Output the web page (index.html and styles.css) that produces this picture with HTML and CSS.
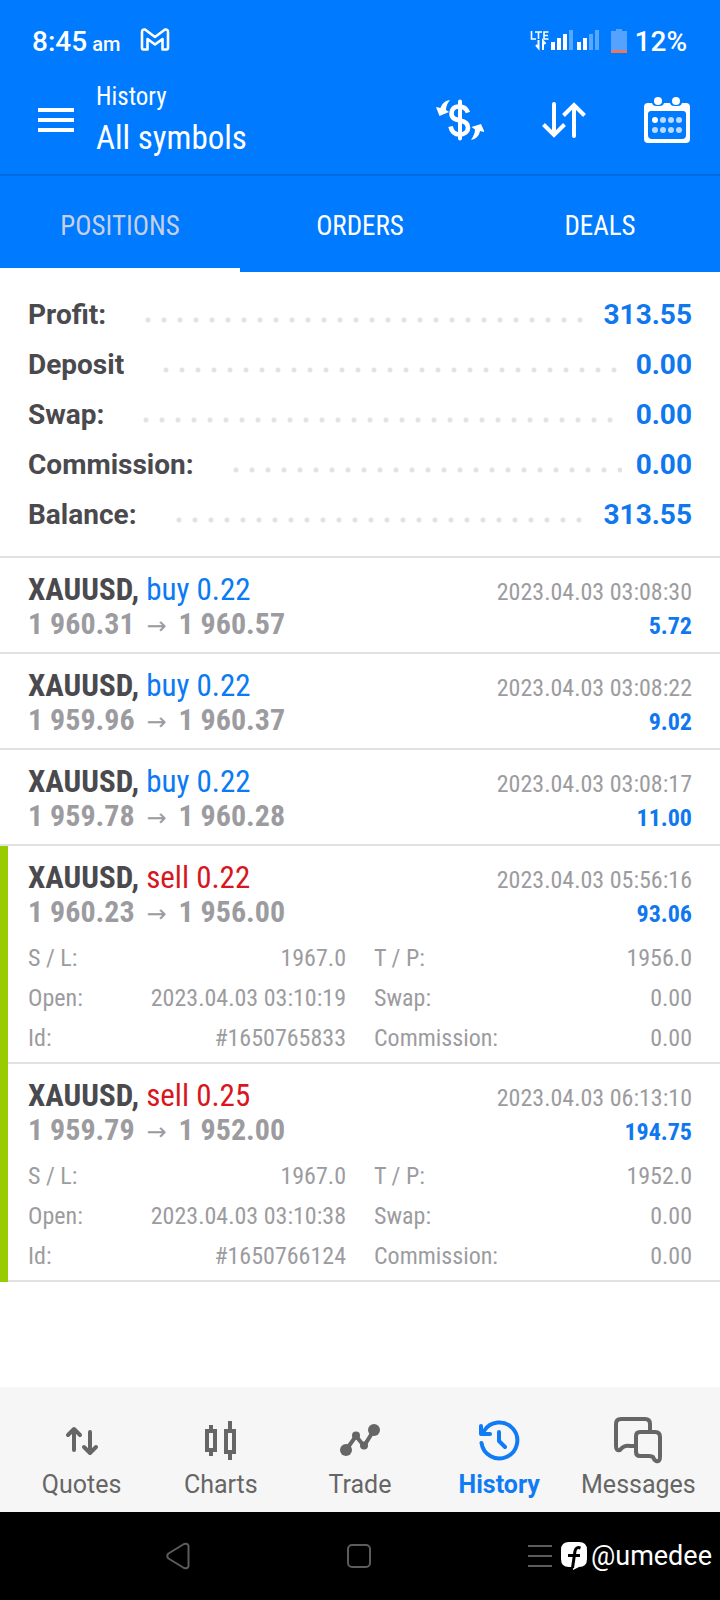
FILE: index.html
```html
<!DOCTYPE html>
<html lang="en">
<head>
<meta charset="utf-8">
<meta name="viewport" content="width=device-width, initial-scale=1">
<title>History</title>
<link rel="stylesheet" href="styles.css">
</head>
<body>
<header class="top">
  <div class="status">
    <span class="clock">8:45<small class="ampm">am</small></span>
    <svg class="gmail" width="30" height="24" viewBox="0 0 30 24" fill="none" stroke="#fff" stroke-width="2.600" stroke-linejoin="round"><path d="M2 4Q2 1 5 1.500L15 9L25 1.500Q28 1 28 4V20Q28 21.500 26.500 21.500H22.500V11L15 16.500L7.500 11V21.500H3.500Q2 21.500 2 20Z"/></svg>
    <svg class="signal" width="70" height="26" viewBox="0 0 70 26"><g fill="none" stroke="#fff" stroke-width="1.600"><path d="M1.500 3V11H6M5 4H12M8.500 4V11M18.500 4H14V11H18.500M14 7.500H18"/><path d="M8.500 12V20L6 17M13 22V13L15.500 16" stroke-width="2"/></g><g fill="#fff"><path d="M21 14h4v8h-4zM27 10h4v12h-4zM33 6h4v16h-4zM47 14h4v8h-4zM53 10h4v12h-4z"/><path opacity=".35" d="M39 2h4v20h-4zM59 6h4v16h-4zM65 2h4v20h-4z"/></g></svg>
    <svg class="battery" width="16" height="26" viewBox="0 0 16 26"><path fill="#55a3ff" d="M5 1h6v2h5v19H0V3h5z"/><path fill="#e8795f" d="M0 22h16v3H0z"/></svg>
    <span class="percent">12%</span>
  </div>
  <div class="appbar">
    <button class="icon-btn menu" aria-label="Menu"><svg width="36" height="24" viewBox="0 0 36 24" fill="#fff"><path d="M0 0h36v4H0zM0 10h36v4H0zM0 20h36v4H0z"/></svg></button>
    <div class="titles"><p class="sub">History</p><h1 class="title">All symbols</h1></div>
    <div class="actions">
      <button class="icon-btn" aria-label="Currency"><svg width="48" height="42" viewBox="0 0 48 42"><g fill="none" stroke="#fff"><path stroke-width="4" stroke-linecap="round" d="M24 2.500V39.500"/><path stroke-width="4.600" d="M32 13.500C30.500 9.500 27 7.500 23 7.500C17 7.500 15.500 11.500 15.500 14.500C15.500 19.500 19.500 20.500 24 21.500C29 22.500 32 24 32 28.500C32 33 28 35.500 23.500 35.500C18.500 35.500 15.500 32 14.500 27.500"/></g><g fill="#fff"><path d="M14 1C8 2 6 5 4.500 9L0 8L3.500 17L13 13L10 11Q10 6 14 1Z"/><path d="M35 41C40 40 43 37 44 32L48.500 33L45 25L35.500 28L39 30.500Q39 35 35 41Z"/></g></svg></button>
      <button class="icon-btn" aria-label="Sort"><svg width="44" height="38" viewBox="0 0 44 38" fill="none" stroke="#fff" stroke-width="4"><path stroke-linecap="round" d="M12 3V33M32 35V5"/><path d="M1.500 23.500L12 34L22.500 23.500M21.500 14.500L32 4L42.500 14.500"/></svg></button>
      <button class="icon-btn" aria-label="Calendar"><svg width="46" height="46" viewBox="0 0 46 46"><path fill="#fff" fill-rule="evenodd" d="M4 6H8C9 9 11 9 14 9C17 9 19 9 20 6H26C27 9 29 9 32 9C35 9 37 9 38 6H42Q46 6 46 10V42Q46 46 42 46H4Q0 46 0 42V10Q0 6 4 6ZM7 14Q4 14 4 17V38Q4 42 8 42H38Q42 42 42 38V17Q42 14 39 14Z"/><g fill="#fff"><circle cx="14" cy="4" r="4"/><circle cx="32" cy="4" r="4"/><circle cx="11" cy="23" r="3"/></g><g fill="#b9daff"><circle cx="19" cy="23" r="3"/><circle cx="27" cy="23" r="3"/><circle cx="35" cy="23" r="3"/><circle cx="11" cy="33" r="3"/><circle cx="19" cy="33" r="3"/><circle cx="27" cy="33" r="3"/><circle cx="35" cy="33" r="3"/></g></svg></button>
    </div>
  </div>
  <div class="tabs" role="tablist">
    <button class="tab active" role="tab" aria-selected="true">POSITIONS</button>
    <button class="tab" role="tab" aria-selected="false">ORDERS</button>
    <button class="tab" role="tab" aria-selected="false">DEALS</button>
  </div>
</header>
<main class="content">
  <dl class="summary">
    <div class="sum-row"><dt>Profit:</dt><dd>313.55</dd></div>
    <div class="sum-row"><dt>Deposit</dt><dd>0.00</dd></div>
    <div class="sum-row"><dt>Swap:</dt><dd>0.00</dd></div>
    <div class="sum-row"><dt>Commission:</dt><dd>0.00</dd></div>
    <div class="sum-row"><dt>Balance:</dt><dd>313.55</dd></div>
  </dl>
  <article class="trade">
    <div class="line"><h2 class="symbol">XAUUSD, <span class="buy">buy 0.22</span></h2><time class="date">2023.04.03 03:08:30</time></div>
    <div class="line"><p class="prices">1 960.31 <span class="arrow">→</span> 1 960.57</p><strong class="profit">5.72</strong></div>
  </article>
  <article class="trade">
    <div class="line"><h2 class="symbol">XAUUSD, <span class="buy">buy 0.22</span></h2><time class="date">2023.04.03 03:08:22</time></div>
    <div class="line"><p class="prices">1 959.96 <span class="arrow">→</span> 1 960.37</p><strong class="profit">9.02</strong></div>
  </article>
  <article class="trade">
    <div class="line"><h2 class="symbol">XAUUSD, <span class="buy">buy 0.22</span></h2><time class="date">2023.04.03 03:08:17</time></div>
    <div class="line"><p class="prices">1 959.78 <span class="arrow">→</span> 1 960.28</p><strong class="profit">11.00</strong></div>
  </article>
  <article class="trade open">
    <div class="line"><h2 class="symbol">XAUUSD, <span class="sell">sell 0.22</span></h2><time class="date">2023.04.03 05:56:16</time></div>
    <div class="line"><p class="prices">1 960.23 <span class="arrow">→</span> 1 956.00</p><strong class="profit">93.06</strong></div>
    <dl class="details">
      <div class="detail"><dt>S / L:</dt><dd>1967.0</dd></div><div class="detail"><dt>T / P:</dt><dd>1956.0</dd></div>
      <div class="detail"><dt>Open:</dt><dd>2023.04.03 03:10:19</dd></div><div class="detail"><dt>Swap:</dt><dd>0.00</dd></div>
      <div class="detail"><dt>Id:</dt><dd>#1650765833</dd></div><div class="detail"><dt>Commission:</dt><dd>0.00</dd></div>
    </dl>
  </article>
  <article class="trade open">
    <div class="line"><h2 class="symbol">XAUUSD, <span class="sell">sell 0.25</span></h2><time class="date">2023.04.03 06:13:10</time></div>
    <div class="line"><p class="prices">1 959.79 <span class="arrow">→</span> 1 952.00</p><strong class="profit">194.75</strong></div>
    <dl class="details">
      <div class="detail"><dt>S / L:</dt><dd>1967.0</dd></div><div class="detail"><dt>T / P:</dt><dd>1952.0</dd></div>
      <div class="detail"><dt>Open:</dt><dd>2023.04.03 03:10:38</dd></div><div class="detail"><dt>Swap:</dt><dd>0.00</dd></div>
      <div class="detail"><dt>Id:</dt><dd>#1650766124</dd></div><div class="detail"><dt>Commission:</dt><dd>0.00</dd></div>
    </dl>
  </article>
</main>
<nav class="bottom">
  <button class="nav-item"><svg width="48" height="48" viewBox="0 0 48 48" fill="none" stroke="currentColor" stroke-width="4" stroke-linecap="round" stroke-linejoin="round"><path d="M16 33V13M10 18L16 12L22 18M32 15V35M26 30L32 36L38 30"/></svg>Quotes</button>
  <button class="nav-item"><svg width="48" height="48" viewBox="0 0 48 48" fill="none" stroke="currentColor" stroke-width="4"><path d="M10 14H18V33H10ZM14 8V13M14 34V39M29 14H37V35H29ZM33 4V13M33 36V43"/></svg>Charts</button>
  <button class="nav-item"><svg width="48" height="48" viewBox="0 0 48 48" fill="currentColor" stroke="currentColor"><path fill="none" stroke-width="4" d="M10 33L20 19L28 29L38 13"/><g stroke="none"><circle cx="10" cy="33" r="6"/><circle cx="20" cy="18.500" r="4"/><circle cx="28" cy="28.500" r="4"/><circle cx="38" cy="13" r="6"/></g></svg>Trade</button>
  <button class="nav-item current" aria-current="page"><svg width="48" height="48" viewBox="0 0 48 48" fill="none" stroke="currentColor" stroke-width="4" stroke-linecap="round" stroke-linejoin="round"><path d="M6.500 26A18 18 0 1 0 9 14M6 9V17H15M24 15V24L30 30"/></svg>History</button>
  <button class="nav-item"><svg width="48" height="48" viewBox="0 0 48 48" fill="none" stroke="currentColor" stroke-width="4" stroke-linejoin="round"><path d="M36 15V7Q36 2 31 2H7Q2 2 2 7V29Q2 34 6 33Q10 28 16 29H21"/><path d="M26 15H41Q46 15 46 20V40Q46 45 42 44Q40 43 39 40Q38 39 35 39H26Q22 39 22 35V19Q22 15 26 15Z"/></svg>Messages</button>
</nav>
<footer class="sysbar">
  <button class="sys-btn" aria-label="Back"><svg width="24" height="28" viewBox="0 0 24 28" fill="none" stroke="#5c5c5c" stroke-width="2" stroke-linejoin="round"><path d="M2.500 11.500L18 2Q22 1 22.500 4V24Q22 27 18 26L2.500 16.500Q0 14 2.500 11.500Z"/></svg></button>
  <button class="sys-btn" aria-label="Home"><svg width="24" height="24" viewBox="0 0 24 24" fill="none" stroke="#5c5c5c" stroke-width="2"><rect x="1" y="1" width="22" height="22" rx="4"/></svg></button>
  <button class="sys-btn recent" aria-label="Recent apps"><svg width="24" height="24" viewBox="0 0 24 24" fill="none" stroke="#5c5c5c" stroke-width="2"><path d="M0 2H24M0 12H24M0 22H24"/></svg></button>
  <div class="handle"><svg width="26" height="28" viewBox="0 0 26 28"><path fill="#fff" d="M8 0H18Q26 0 26 8V17Q26 25 18 25L12 28V25H8Q0 25 0 17V8Q0 0 8 0Z"/><path fill="none" stroke="#000" stroke-width="3" d="M19.500 6Q15 4.500 14 9L11.500 26M7 13.500H19"/></svg><span>@umedee</span></div>
</footer>
</body>
</html>
```
FILE: styles.css
```css
* { box-sizing: border-box; }
body, h1, h2, p, dl, dd { margin: 0; }
body {
  min-height: 100vh;
  display: flex;
  flex-direction: column;
  background: #fff;
  color: #4a4a4e;
  font-family: "Roboto Condensed", "Liberation Sans Narrow", Roboto, sans-serif;
  font-size: 24px;
}
button {
  padding: 0;
  border: 0;
  background: none;
  color: inherit;
  font: inherit;
}
svg { display: block; flex: none; }
.top { background: #007aff; color: #fff; }
.status {
  display: flex;
  align-items: center;
  height: 66px;
  padding: 16px 33px 0 32px;
  font-family: Roboto, sans-serif;
  font-size: 28px;
  font-weight: 500;
}
.clock { display: flex; align-items: baseline; gap: 5px; }
.ampm { font-size: 20px; }
.gmail { margin: 0 0 2px 20px; }
.signal { margin-left: auto; }
.battery { margin: 0 8px 0 11px; }
.appbar {
  display: flex;
  align-items: center;
  height: 110px;
  padding: 0 30px 0 38px;
  border-bottom: 2px solid #006ae0;
}
.titles { margin-left: 22px; padding-top: 4px; }
.sub { font-size: 25px; line-height: 32px; }
.title { font-size: 33px; font-weight: 400; line-height: 50px; }
.actions { display: flex; align-items: center; gap: 58px; margin-left: auto; }
.tabs { display: grid; grid-template-columns: repeat(3, 1fr); }
.tab { height: 96px; padding-top: 8px; border-bottom: 4px solid transparent; font-size: 27px; }
.active { border-color: #fff; color: #c6cfe4; }
.content { flex: 1; }
.summary { padding: 18px 28px 16px; border-bottom: 2px solid #e2e2e4; }
.sum-row {
  display: flex;
  align-items: center;
  font-family: Roboto, sans-serif;
  font-size: 28px;
  font-weight: 700;
  line-height: 50px;
}
.sum-row::before {
  content: "";
  order: 1;
  flex: 1;
  height: 6px;
  margin: 10px 14px 0 39px;
  background: radial-gradient(circle at 3px 3px, #e2e2e4 2px, transparent 3px) 0 0 / 16px 6px repeat-x;
}
.sum-row dd { order: 2; color: #0f78ee; }
.trade { padding: 15px 28px 11px; border-bottom: 2px solid #e2e2e4; }
.open {
  padding-bottom: 6px;
  border-bottom: 0;
  box-shadow: inset 8px 0 #99cc00, inset 0 -2px #e2e2e4;
}
.line {
  display: flex;
  justify-content: space-between;
  align-items: baseline;
  height: 34px;
  line-height: 34px;
}
.symbol { font-size: 31px; font-weight: 700; }
.prices { font-size: 30px; font-weight: 700; }
.symbol span { font-weight: 400; }
.buy { color: #0a7af5; }
.sell { color: #d8161e; }
.prices, .date, .details { color: #9c9ca0; }
.arrow { margin: 0 5px; font-family: "DejaVu Sans", sans-serif; font-size: 24px; font-weight: 400; line-height: 24px; }
.date, .profit, .details { font-size: 24px; }
.profit { color: #0f78ee; }
.details {
  display: grid;
  grid-template-columns: 318px 1fr;
  column-gap: 28px;
  margin-top: 9px;
  line-height: 40px;
}
.detail { display: flex; justify-content: space-between; }
.bottom {
  display: grid;
  grid-template-columns: repeat(5, 1fr);
  padding: 30px 12px 11px;
  background: #f6f6f6;
  color: #666;
  font-family: Roboto, sans-serif;
}
.nav-item {
  display: flex;
  flex-direction: column;
  align-items: center;
  gap: 4px;
  font-size: 25px;
  line-height: 32px;
}
.current { color: #0f7bf5; font-weight: 700; }
.sysbar {
  display: flex;
  align-items: center;
  justify-content: flex-end;
  height: 88px;
  padding: 0 8px;
  background: #000;
  color: #fff;
  font-family: Roboto, sans-serif;
}
.sys-btn { margin-right: 157px; }
.recent { margin-right: 9px; }
.handle { display: flex; align-items: center; gap: 4px; font-size: 27px; }
```
